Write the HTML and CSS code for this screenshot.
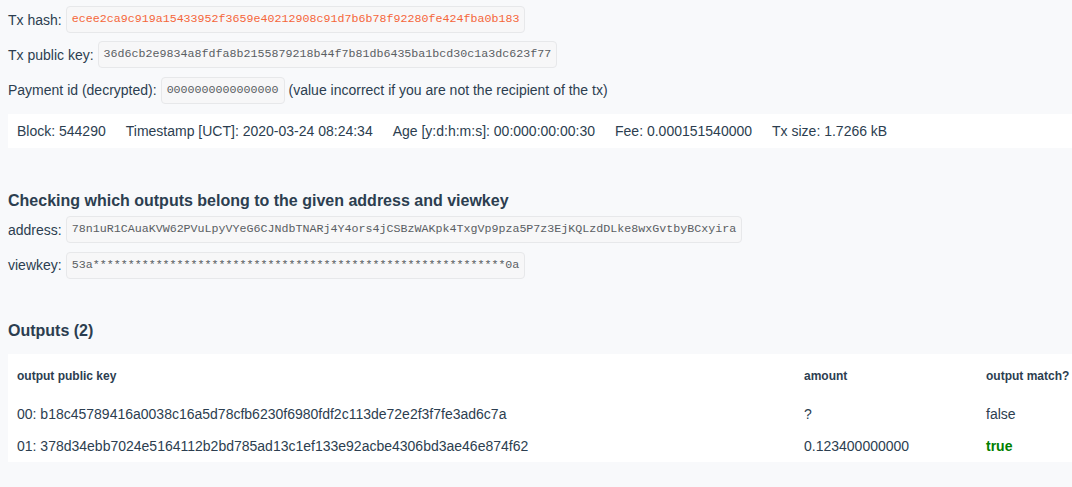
FILE: index.html
```html
<!DOCTYPE html>
<html lang="en">
<head>
<meta charset="utf-8">
<title>Tx outputs</title>
<link rel="stylesheet" href="styles.css">
</head>
<body>
<div class="fields">
  <div class="field"><span class="label">Tx hash:</span><code class="code code-hash">ecee2ca9c919a15433952f3659e40212908c91d7b6b78f92280fe424fba0b183</code></div>
  <div class="field"><span class="label">Tx public key:</span><code class="code">36d6cb2e9834a8fdfa8b2155879218b44f7b81db6435ba1bcd30c1a3dc623f77</code></div>
  <div class="field"><span class="label">Payment id (decrypted):</span><code class="code">0000000000000000</code><span class="note">(value incorrect if you are not the recipient of the tx)</span></div>
</div>

<div class="info-bar">
  <span>Block: 544290</span>
  <span>Timestamp [UCT]: 2020-03-24 08:24:34</span>
  <span>Age [y:d:h:m:s]: 00:000:00:00:30</span>
  <span>Fee: 0.000151540000</span>
  <span>Tx size: 1.7266 kB</span>
</div>

<h4 class="section-title first">Checking which outputs belong to the given address and viewkey</h4>
<div class="fields tight">
  <div class="field"><span class="label">address:</span><code class="code">78n1uR1CAuaKVW62PVuLpyVYeG6CJNdbTNARj4Y4ors4jCSBzWAKpk4TxgVp9pza5P7z3EjKQLzdDLke8wxGvtbyBCxyira</code></div>
  <div class="field"><span class="label">viewkey:</span><code class="code">53a***********************************************************0a</code></div>
</div>

<h4 class="section-title second">Outputs (2)</h4>
<table class="outputs">
  <colgroup><col class="c-key"><col class="c-amount"><col class="c-match"></colgroup>
  <thead>
    <tr><th>output public key</th><th>amount</th><th>output match?</th></tr>
  </thead>
  <tbody>
    <tr><td>00: b18c45789416a0038c16a5d78cfb6230f6980fdf2c113de72e2f3f7fe3ad6c7a</td><td>?</td><td>false</td></tr>
    <tr><td>01: 378d34ebb7024e5164112b2bd785ad13c1ef133e92acbe4306bd3ae46e874f62</td><td>0.123400000000</td><td><span class="match-true">true</span></td></tr>
  </tbody>
</table>
</body>
</html>
```

FILE: styles.css
```css
html, body {
  margin: 0;
  padding: 0;
}

body {
  padding-left: 8px;
  background: #f8f9fb;
  color: #2c3e50;
  font-family: "Liberation Sans", Arial, sans-serif;
  font-size: 14px;
  line-height: 20px;
  overflow: hidden;
}

.fields {
  display: flex;
  flex-direction: column;
  gap: 8.3px;
  padding-top: 6px;
}

.fields.tight {
  padding-top: 5.5px;
}

.field {
  display: flex;
  align-items: center;
  white-space: nowrap;
  height: 27px;
}

.label {
  margin-right: 4px;
}

.code {
  display: inline-block;
  box-sizing: border-box;
  height: 27px;
  line-height: 25px;
  padding: 0 5px;
  border: 1px solid #e7e8ea;
  border-radius: 4px;
  background: #f7f7f8;
  color: #5a5e63;
  font-family: "Liberation Mono", "Courier New", monospace;
  font-size: 11.67px;
}

.code-hash {
  color: #f5663a;
}

.note {
  margin-left: 4px;
}

.info-bar {
  display: flex;
  align-items: center;
  gap: 20px;
  height: 34px;
  margin-top: 10.7px;
  padding-left: 9px;
  background: #ffffff;
  white-space: nowrap;
}

.section-title {
  margin: 0;
  font-size: 16px;
  line-height: 20px;
  font-weight: bold;
  color: #2c3e50;
}

.section-title.first {
  margin-top: 42.5px;
}

.section-title.second {
  margin-top: 42px;
  margin-bottom: 13.3px;
}

.outputs {
  width: 100%;
  border-collapse: collapse;
  table-layout: fixed;
  background: #ffffff;
  white-space: nowrap;
}

.c-key { width: 787px; }
.c-amount { width: 182px; }

.outputs th {
  text-align: left;
  font-size: 12px;
  font-weight: bold;
  line-height: 20px;
  padding: 12px 0 12px 9px;
}

.outputs td {
  padding: 6px 0 6px 9px;
  line-height: 20px;
}

.match-true {
  color: #008000;
  font-weight: bold;
}
```
